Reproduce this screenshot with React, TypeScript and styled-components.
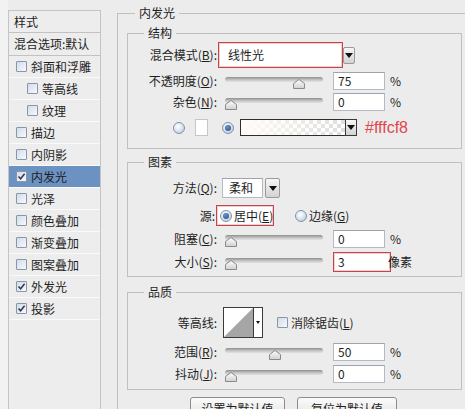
import React from 'react';
import styled, { createGlobalStyle } from 'styled-components';

const Global = createGlobalStyle`
  html, body { margin: 0; padding: 0; background: #ececec; }
  body {
    width: 465px; height: 409px; overflow: hidden;
    font-family: "Noto Sans CJK SC", "Noto Sans", sans-serif;
    font-size: 12px; line-height: 16px; color: #1e1e1e;
  }
  u { text-decoration: underline; text-underline-offset: 1px; }
`;

const Page = styled.div`
  display: flex; width: 465px; height: 409px; overflow: hidden; background: #ececec;
`;

/* ---------- left style list ---------- */
const Sidebar = styled.aside`
  flex: none; width: 117px; box-sizing: border-box; padding: 10px 0 0 8px;
  background: linear-gradient(to right, #f2f2f2 0 8px, #ececec 8px);
`;
const StyleList = styled.div`
  width: 93px; height: 420px; box-sizing: border-box;
  border: 1px solid #c4c4c4; background: #ededed;
  display: flex; flex-direction: column;
`;
const ListItem = styled.div<{ $head?: boolean; $indent?: boolean; $active?: boolean; $tall?: boolean }>`
  flex: none; height: ${p => (p.$tall ? 22 : 21)}px;
  display: flex; align-items: center; gap: 4px;
  padding-left: ${p => (p.$head ? 5 : p.$indent ? 18 : 7)}px;
  border-bottom: 1px solid ${p => (p.$head ? '#c2c2c2' : '#fafafa')};
  background: ${p => (p.$active ? '#6c92c2' : 'transparent')};
  white-space: nowrap; font-size: 12px;
`;
const Box = styled.span`
  flex: none; width: 11px; height: 11px; box-sizing: border-box;
  border: 1px solid #8796ab; border-radius: 1px;
  background: linear-gradient(135deg, #d3dce8, #f7f9fc);
  display: flex; align-items: center; justify-content: center;
`;

const Check: React.FC<{ on?: boolean }> = ({ on }) => (
  <Box>
    {on && (
      <svg width="9" height="9" viewBox="0 0 9 9">
        <path d="M1.5 4.5 L3.6 6.8 L7.6 1.8" fill="none" stroke="#2d3a4a" strokeWidth="1.5" />
      </svg>
    )}
  </Box>
);

/* ---------- right panel ---------- */
const Main = styled.main`
  flex: none; width: 360px; padding-top: 5px; box-sizing: border-box;
`;
const Outer = styled.fieldset`
  margin: 0; padding: 0 0 0 9px; min-width: 0; height: 430px; box-sizing: border-box;
  border: 1px solid #c0c0c0;
`;
const Section = styled.fieldset<{ $mt: number; $pb: number }>`
  margin: ${p => p.$mt}px 0 0 0; padding: 0 0 ${p => p.$pb}px 0; min-width: 0;
  width: 335px; box-sizing: border-box; border: 1px solid #c0c0c0;
`;
const Legend = styled.legend<{ $ml: number }>`
  margin-left: ${p => p.$ml}px; padding: 0 4px; height: 16px; line-height: 16px; font-size: 12px;
`;
const Row = styled.div<{ $mt: number; $h: number; $pl?: number }>`
  display: flex; align-items: center;
  height: ${p => p.$h}px; margin-top: ${p => p.$mt}px; padding-left: ${p => p.$pl ?? 0}px;
  white-space: nowrap;
`;
const Label = styled.span<{ $w?: number }>`
  flex: none; width: ${p => p.$w ?? 90}px; box-sizing: border-box;
  padding-right: 1px; text-align: right;
`;
const Field = styled.div<{ $w: number; $h: number; $ml?: number; $red?: boolean; $pad?: number }>`
  flex: none; width: ${p => p.$w}px; height: ${p => p.$h}px; box-sizing: border-box;
  margin-left: ${p => p.$ml ?? 0}px; padding-left: ${p => p.$pad ?? 4}px;
  display: flex; align-items: center; background: #fff;
  border: 1px solid ${p => (p.$red ? '#c4444a' : '#b4bac3')};
  ${p => (p.$red ? 'box-shadow: inset 0 0 0 1px #f1cfd0;' : 'border-top-color: #9da4ad;')}
`;
const Unit = styled.span<{ $ml?: number }>`
  margin-left: ${p => p.$ml ?? 5}px;
`;
const Text = styled.span<{ $ml?: number }>`
  margin-left: ${p => p.$ml ?? 0}px;
`;
const DropBtn = styled.span<{ $w: number; $h: number; $ml?: number; $dark?: boolean }>`
  flex: none; width: ${p => p.$w}px; height: ${p => p.$h}px; box-sizing: border-box;
  margin-left: ${p => p.$ml ?? 0}px;
  border: 1px solid ${p => (p.$dark ? '#3a3a3a' : '#9a9a9a')};
  border-radius: ${p => (p.$dark ? 0 : 2)}px;
  background: linear-gradient(#f7f7f7, #d2d2d2);
  display: flex; align-items: center; justify-content: center;
  &::after {
    content: ''; border-left: 4px solid transparent; border-right: 4px solid transparent;
    border-top: 5px solid #111;
  }
`;
const SliderWrap = styled.div`
  flex: none; position: relative; width: 98px; height: 18px; margin-left: 7px;
`;
const Track = styled.div`
  margin-top: 5px; height: 5px; border-radius: 3px;
  background: linear-gradient(#8f8f8f, #c9c9c9 60%, #e2e2e2);
`;
const Thumb = styled.svg`
  position: absolute; top: 7px;
`;
const Slider: React.FC<{ value: number }> = ({ value }) => (
  <SliderWrap>
    <Track />
    <Thumb width="12" height="10" viewBox="0 0 12 10" style={{ left: Math.round((value / 100) * 87) }}>
      <defs>
        <linearGradient id="tg" x1="0" y1="0" x2="0" y2="1">
          <stop offset="0" stopColor="#ffffff" />
          <stop offset="1" stopColor="#d0d0d0" />
        </linearGradient>
      </defs>
      <path d="M0.5 4.5 L6 0.5 L11.5 4.5 L11.5 9.5 L0.5 9.5 Z" fill="url(#tg)" stroke="#8a8a8a" />
    </Thumb>
  </SliderWrap>
);
const RadioDot = styled.span<{ $on?: boolean; $ml?: number }>`
  flex: none; width: 12px; height: 12px; box-sizing: border-box; border-radius: 50%;
  margin-left: ${p => p.$ml ?? 0}px;
  border: 1px solid #8393aa;
  background: radial-gradient(circle at 40% 35%, #ffffff 0%, #dde7f2 45%, #a9bfd8 100%);
  display: flex; align-items: center; justify-content: center;
  &::after {
    content: ''; width: 6px; height: 6px; border-radius: 50%;
    background: ${p => (p.$on ? 'radial-gradient(circle at 40% 35%, #6f93c8, #1f4784)' : 'transparent')};
  }
`;
const Swatch = styled.span<{ $ml: number }>`
  flex: none; width: 13px; height: 17px; box-sizing: border-box; margin-left: ${p => p.$ml}px;
  background: #fff; border: 1px solid #c6c6c6;
`;
const GradientBox = styled.span<{ $ml: number }>`
  flex: none; width: 105px; height: 17px; box-sizing: border-box; margin-left: ${p => p.$ml}px;
  border: 1px solid #2e2e2e; border-right: none;
  background:
    linear-gradient(to right, #fffcf8 0%, rgba(255, 252, 248, 0.2) 100%),
    repeating-conic-gradient(#d6d6d6 0 25%, #ffffff 0 50%) 0 0 / 8px 8px;
`;
const Hex = styled.span`
  margin-left: 8px; font-family: "Liberation Sans", Arial, sans-serif; font-size: 16px;
  color: #e0474d; line-height: 17px;
`;
const ContourBox = styled.span<{ $ml: number }>`
  flex: none; display: flex; margin-left: ${p => p.$ml}px;
  width: 40px; height: 31px; box-sizing: border-box; border: 1px solid #3a3a3a; background: #fff;
`;
const ContourArrow = styled.span`
  flex: 1; border-left: 1px solid #3a3a3a; display: flex; align-items: center; justify-content: center;
  &::after {
    content: ''; border-left: 2.5px solid transparent; border-right: 2.5px solid transparent;
    border-top: 3px solid #111;
  }
`;
const ButtonRow = styled.div`
  display: flex; gap: 12px; margin-top: 7px; padding-left: 63px;
`;
const Button = styled.button<{ $w: number }>`
  width: ${p => p.$w}px; height: 22px; box-sizing: border-box; padding: 0;
  font-family: "Noto Sans CJK SC", sans-serif; font-size: 12px; color: #1e1e1e;
  border: 1px solid #8d8d8d; border-radius: 3px;
  background: linear-gradient(#fbfbfb, #e2e2e2);
`;

const listItems: { t: string; indent?: boolean; on?: boolean; active?: boolean }[] = [
  { t: '斜面和浮雕' },
  { t: '等高线', indent: true },
  { t: '纹理', indent: true },
  { t: '描边' },
  { t: '内阴影' },
  { t: '内发光', on: true, active: true },
  { t: '光泽' },
  { t: '颜色叠加' },
  { t: '渐变叠加' },
  { t: '图案叠加' },
  { t: '外发光', on: true },
  { t: '投影', on: true },
];

export default function App() {
  return (
    <>
      <Global />
      <Page>
        <Sidebar>
          <StyleList>
            <ListItem $head>样式</ListItem>
            <ListItem $head $tall>混合选项:默认</ListItem>
            {listItems.map(it => (
              <ListItem key={it.t} $indent={it.indent} $active={it.active}>
                <Check on={it.on} />
                {it.t}
              </ListItem>
            ))}
          </StyleList>
        </Sidebar>

        <Main>
          <Outer>
            <Legend $ml={8}>内发光</Legend>

            <Section $mt={4} $pb={12}>
              <Legend $ml={16}>结构</Legend>
              <Row $mt={1} $h={26}>
                <Label>混合模式(<u>B</u>):</Label>
                <Field $w={125} $h={26} $red $pad={9}>线性光</Field>
                <DropBtn $w={12} $h={17} />
              </Row>
              <Row $mt={4} $h={18}>
                <Label>不透明度(<u>O</u>):</Label>
                <Slider value={78} />
                <Field $w={52} $h={18} $ml={10}>75</Field>
                <Unit>%</Unit>
              </Row>
              <Row $mt={3} $h={18}>
                <Label>杂色(<u>N</u>):</Label>
                <Slider value={0} />
                <Field $w={52} $h={18} $ml={10}>0</Field>
                <Unit>%</Unit>
              </Row>
              <Row $mt={8} $h={17} $pl={45}>
                <RadioDot />
                <Swatch $ml={10} />
                <RadioDot $on $ml={14} />
                <GradientBox $ml={6} />
                <DropBtn $w={12} $h={17} $dark />
                <Hex>#fffcf8</Hex>
              </Row>
            </Section>

            <Section $mt={5} $pb={4}>
              <Legend $ml={16}>图素</Legend>
              <Row $mt={8} $h={20}>
                <Label>方法(<u>Q</u>):</Label>
                <Field $w={41} $h={20} $ml={4} $pad={6}>柔和</Field>
                <DropBtn $w={15} $h={20} $ml={2} />
              </Row>
              <Row $mt={7} $h={21}>
                <Label $w={88}>源:</Label>
                <Field $w={58} $h={21} $red $pad={3}>
                  <RadioDot $on />
                  <Text $ml={2}>居中(<u>E</u>)</Text>
                </Field>
                <RadioDot $ml={21} />
                <Text $ml={2}>边缘(<u>G</u>)</Text>
              </Row>
              <Row $mt={4} $h={18}>
                <Label>阻塞(<u>C</u>):</Label>
                <Slider value={0} />
                <Field $w={52} $h={18} $ml={10}>0</Field>
                <Unit>%</Unit>
              </Row>
              <Row $mt={4} $h={20}>
                <Label>大小(<u>S</u>):</Label>
                <Slider value={0} />
                <Field $w={58} $h={20} $ml={10} $red>3</Field>
                <Unit $ml={-3}>像素</Unit>
              </Row>
            </Section>

            <Section $mt={7} $pb={6}>
              <Legend $ml={16}>品质</Legend>
              <Row $mt={7} $h={31}>
                <Label>等高线:</Label>
                <ContourBox $ml={5}>
                  <svg width="29" height="29" viewBox="0 0 29 29">
                    <path d="M0 29 L29 0 L29 29 Z" fill="#a6a6a6" />
                  </svg>
                  <ContourArrow />
                </ContourBox>
                <Text $ml={14}><Check /></Text>
                <Text $ml={3}>消除锯齿(<u>L</u>)</Text>
              </Row>
              <Row $mt={5} $h={18}>
                <Label>范围(<u>R</u>):</Label>
                <Slider value={50} />
                <Field $w={52} $h={18} $ml={10}>50</Field>
                <Unit>%</Unit>
              </Row>
              <Row $mt={4} $h={18}>
                <Label>抖动(<u>J</u>):</Label>
                <Slider value={0} />
                <Field $w={52} $h={18} $ml={10}>0</Field>
                <Unit>%</Unit>
              </Row>
            </Section>

            <ButtonRow>
              <Button $w={95}>设置为默认值</Button>
              <Button $w={100}>复位为默认值</Button>
            </ButtonRow>
          </Outer>
        </Main>
      </Page>
    </>
  );
}
